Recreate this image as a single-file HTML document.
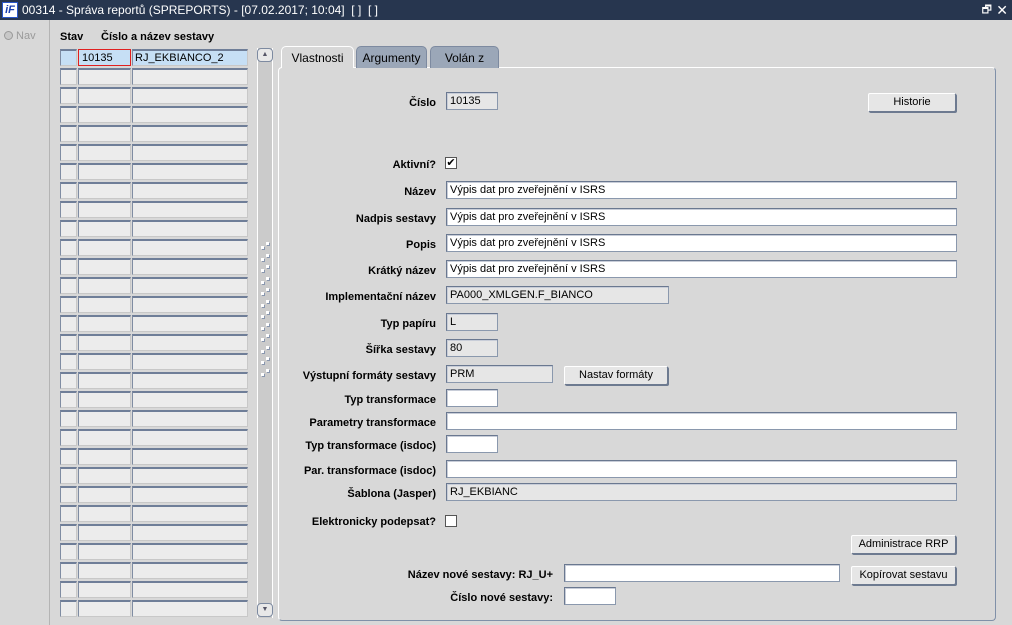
<!DOCTYPE html><html><head><meta charset="utf-8"><style>
*{box-sizing:border-box}body{margin:0;width:1012px;height:625px;background:#d8d8d8;font-family:"Liberation Sans",Arial,sans-serif;font-size:11px;position:relative;overflow:hidden;color:#000}
.a{position:absolute}
.title{left:0;top:0;width:1012px;height:20px;background:#27364f;color:#fff;font-size:12px;line-height:20px}
.lbl{position:absolute;right:576px;font-weight:bold;font-size:11px;white-space:nowrap;margin-top:2px}
.in{position:absolute;height:18px;background:#fff;border:1px solid #8a98ad;border-top-color:#6a7890;border-left-color:#6a7890;font-size:11px;line-height:17px;padding-left:3px;box-shadow:inset 1px 1px 0 #c8cdd8}
.g{background:#e6e6e6}
.btn{position:absolute;height:19px;background:#e6e6e6;border:1px solid #6d7a90;border-top-color:#fff;border-left-color:#fff;box-shadow:1px 1px 0 #6d7a90;text-align:center;font-size:11px;line-height:17px;border-radius:2px}
.cell{position:absolute;height:17px;background:#ececec;border:1px solid #c8c8c8;border-top:2px solid #6f7e98;border-left:1px solid #7f8ca2;line-height:15px}
.tab{position:absolute;top:46px;height:22px;border-radius:5px 5px 0 0;font-size:12px;text-align:center;line-height:22px}
</style></head><body>
<div class="a title"><span style="position:absolute;left:2px;top:2px;width:16px;height:16px;background:#fff;border:1px solid #2a56c8;color:#1a3fb0;font:bold italic 11px/14px 'Liberation Sans';text-align:center">iF</span><span style="position:absolute;left:22px">00314 - Správa reportů (SPREPORTS) - [07.02.2017; 10:04]&nbsp; [ ]&nbsp; [ ]</span><span style="position:absolute;right:20px;top:0;font-size:11px">🗗</span><span style="position:absolute;right:4px;top:0;font-size:14px">✕</span></div>
<div class="a" style="left:49px;top:20px;width:1px;height:605px;background:#b4b4b4"></div>
<div class="a" style="left:4px;top:30px;color:#9a9a9a;font-size:11px"><span style="display:inline-block;width:9px;height:9px;border-radius:50%;background:#c8c8c8;border:1px solid #999;vertical-align:-1px"></span> Nav</div>
<div class="a" style="left:60px;top:31px;font-weight:bold">Stav</div>
<div class="a" style="left:101px;top:31px;font-weight:bold">Číslo a název sestavy</div>
<div id="grid"></div>
<div class="a" style="left:257px;top:48px;width:16px;height:570px;background:#cbcbcb;border-left:1px solid #fff;border-right:1px solid #fff"></div>
<div class="a" style="left:257px;top:48px;width:16px;height:14px;border:1px solid #7d8aa0;border-radius:4px;background:#e8e8e8;font-size:7px;text-align:center;line-height:12px;color:#556">▲</div>
<div class="a" style="left:257px;top:603px;width:16px;height:14px;border:1px solid #7d8aa0;border-radius:4px;background:#e8e8e8;font-size:7px;text-align:center;line-height:12px;color:#556">▼</div>
<div class="a" style="left:278px;top:67px;width:718px;height:554px;border:1px solid #8090a8;border-top-color:#fff;border-left-color:#fff;border-radius:4px;background:#d8d8d8"></div>
<div class="tab" style="left:281px;width:73px;background:#d8d8d8;border:1px solid #fff;border-bottom:none">Vlastnosti</div>
<div class="tab" style="left:356px;width:71px;background:#9ba7b8;border:1px solid #7d8aa0;border-bottom:none">Argumenty</div>
<div class="tab" style="left:430px;width:69px;background:#9ba7b8;border:1px solid #7d8aa0;border-bottom:none">Volán z</div>

<div class="lbl" style="top:95px">Číslo</div><div class="in g" style="left:446px;top:92px;width:52px">10135</div>
<div class="btn" style="left:868px;top:93px;width:88px">Historie</div>
<div class="lbl" style="top:157px">Aktivní?</div><div class="a" style="left:445px;top:157px;width:12px;height:12px;background:#fff;border:1px solid #555;font-size:11px;line-height:10px;text-align:center">✔</div>
<div class="lbl" style="top:184px">Název</div><div class="in" style="left:446px;top:181px;width:511px">Výpis dat pro zveřejnění v ISRS</div>
<div class="lbl" style="top:211px">Nadpis sestavy</div><div class="in" style="left:446px;top:208px;width:511px">Výpis dat pro zveřejnění v ISRS</div>
<div class="lbl" style="top:237px">Popis</div><div class="in" style="left:446px;top:234px;width:511px">Výpis dat pro zveřejnění v ISRS</div>
<div class="lbl" style="top:263px">Krátký název</div><div class="in" style="left:446px;top:260px;width:511px">Výpis dat pro zveřejnění v ISRS</div>
<div class="lbl" style="top:289px">Implementační název</div><div class="in g" style="left:446px;top:286px;width:223px">PA000_XMLGEN.F_BIANCO</div>
<div class="lbl" style="top:316px">Typ papíru</div><div class="in g" style="left:446px;top:313px;width:52px">L</div>
<div class="lbl" style="top:342px">Šířka sestavy</div><div class="in g" style="left:446px;top:339px;width:52px">80</div>
<div class="lbl" style="top:368px">Výstupní formáty sestavy</div><div class="in g" style="left:446px;top:365px;width:107px">PRM</div>
<div class="btn" style="left:564px;top:366px;width:104px">Nastav formáty</div>
<div class="lbl" style="top:392px">Typ transformace</div><div class="in" style="left:446px;top:389px;width:52px"></div>
<div class="lbl" style="top:415px">Parametry transformace</div><div class="in" style="left:446px;top:412px;width:511px"></div>
<div class="lbl" style="top:438px">Typ transformace (isdoc)</div><div class="in" style="left:446px;top:435px;width:52px"></div>
<div class="lbl" style="top:463px">Par. transformace (isdoc)</div><div class="in" style="left:446px;top:460px;width:511px"></div>
<div class="lbl" style="top:486px">Šablona (Jasper)</div><div class="in g" style="left:446px;top:483px;width:511px">RJ_EKBIANC</div>
<div class="lbl" style="top:514px">Elektronicky podepsat?</div><div class="a" style="left:445px;top:515px;width:12px;height:12px;background:#fff;border:1px solid #555"></div>
<div class="btn" style="left:851px;top:535px;width:105px">Administrace RRP</div>
<div class="a" style="right:459px;top:569px;font-weight:bold">Název nové sestavy: RJ_U+</div><div class="in" style="left:564px;top:564px;width:276px"></div>
<div class="btn" style="left:851px;top:566px;width:105px">Kopírovat sestavu</div>
<div class="a" style="right:459px;top:592px;font-weight:bold">Číslo nové sestavy:</div><div class="in" style="left:564px;top:587px;width:52px"></div>
<script>
var h='';for(var i=0;i<30;i++){var y=49+i*19;var f=i==0?'background:#c6dff5;':'';
h+='<div class="cell" style="left:60px;top:'+y+'px;width:17px;'+f+'"></div>';
h+='<div class="cell" style="left:78px;top:'+y+'px;width:53px;'+f+(i==0?'border:1px solid #e02020;padding-left:3px;line-height:16px':'')+'">'+(i==0?'10135':'')+'</div>';
h+='<div class="cell" style="left:132px;top:'+y+'px;width:116px;'+f+(i==0?'padding-left:2px':'')+'">'+(i==0?'RJ_EKBIANCO_2':'')+'</div>';}
var d='';for(var j=0;j<12;j++){d+='<div class="a" style="left:261px;top:'+(246+j*11.5)+'px;width:3px;height:3px;background:#fff;box-shadow:1px 1px 0 #8896ae"></div><div class="a" style="left:266px;top:'+(242+j*11.5)+'px;width:3px;height:3px;background:#fff;box-shadow:1px 1px 0 #8896ae"></div>';}
document.getElementById('grid').innerHTML=h;document.body.insertAdjacentHTML('beforeend',d);
</script>
</body></html>
